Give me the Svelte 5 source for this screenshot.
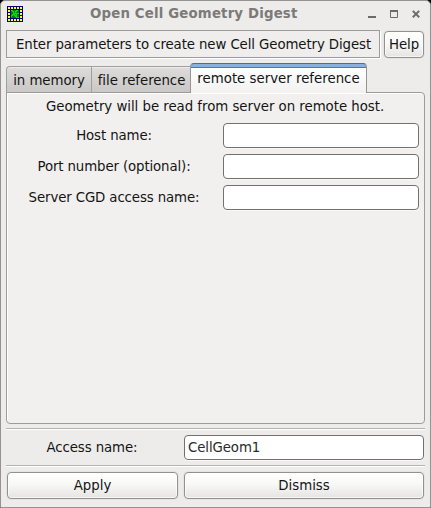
<script>
  const tabs = [
    { label: 'in memory', width: 85 },
    { label: 'file reference', width: 100 },
    { label: 'remote server reference', width: 177 }
  ];
  const fields = ['Host name:', 'Port number (optional):', 'Server CGD access name:'];
  const dots = [1, 4, 7, 10, 13];
  let active = $state(2);
  let values = $state(['', '', '']);
  let accessName = $state('CellGeom1');
</script>

<div class="screen">
  <div class="window">
    <header>
      <svg class="logo" width="16" height="16" viewBox="0 0 16 16" shape-rendering="crispEdges">
        <rect width="16" height="16" fill="#00007c" />
        {#each dots as d}
          <rect x={d} y="1" width="2" height="2" fill="#ffff20" />
          <rect x={d} y="13" width="2" height="2" fill="#ffff20" />
          <rect x="1" y={d} width="2" height="2" fill="#ffff20" />
          <rect x="13" y={d} width="2" height="2" fill="#ffff20" />
        {/each}
        <rect x="4" y="4" width="8" height="8" fill="#008000" />
        <path d="M4 4h2v1h1v2h1V5h1V4h2v1h-1v1H9v2H8v1h1v2H8v-1H7V9H6v1H5v1H4V9h1V8h1V6H5V5H4zM9 7h3v1h-2v3h2v1H9z" fill="#00e000" />
      </svg>
      <h1>Open Cell Geometry Digest</h1>
      <div class="controls">
        <svg width="52" height="9" viewBox="0 0 52 9" fill="none" stroke="#6c6b69">
          <path d="M0 7h8" stroke-width="2" />
          <path d="M22.5 1v6.5h7V1" />
          <path d="M22 1h8" stroke-width="2" />
          <path d="M44.8 .9l6.4 6.4M51.2 .9l-6.4 6.4" stroke-width="2" />
        </svg>
      </div>
    </header>

    <div class="intro">
      <div class="message"><span>Enter parameters to create new Cell Geometry Digest</span></div>
      <button class="help">Help</button>
    </div>

    <nav>
      {#each tabs as tab, i}
        <button class="tab" class:active={active === i} style:width="{tab.width}px" onclick={() => (active = i)}>{tab.label}</button>
      {/each}
    </nav>
    <section>
      <p>Geometry will be read from server on remote host.</p>
      {#each fields as field, i}
        <label><span>{field}</span><input type="text" bind:value={values[i]} /></label>
      {/each}
    </section>

    <hr />
    <label class="access"><span>Access name:</span><input type="text" bind:value={accessName} /></label>
    <hr />
    <footer>
      <button class="apply">Apply</button>
      <button class="dismiss">Dismiss</button>
    </footer>
  </div>
</div>

<style>
  :global(body) { overflow: hidden; }
  .screen { background: #000; width: 431px; height: 508px; }
  .window, .window * { box-sizing: border-box; }
  .window {
    display: flex; flex-direction: column;
    width: 431px; height: 508px; padding: 0 6px 0 5px;
    border: 1px solid #949391; border-radius: 5px 5px 0 0;
    background: #edeceb; color: #141414;
    font: 13.33px/16px "DejaVu Sans", sans-serif;
  }
  button, input { font: inherit; color: inherit; margin: 0; }
  header { display: flex; height: 29px; padding: 5px 0 0 1px; }
  .logo { flex: none; }
  h1 { margin: 0 0 0 67px; width: 208px; font-size: 13.33px; line-height: 16px; letter-spacing: .16px; color: #7b7a78; white-space: nowrap; }
  .controls { margin: 4px 0 0 70px; height: 9px; }
  .controls svg { display: block; }
  .intro { display: flex; gap: 4px; height: 28px; }
  .message {
    width: 374px; height: 28px; padding: 6px 0 0 9px; white-space: nowrap; letter-spacing: -.1px;
    border: 1px solid #9d9c9b; box-shadow: 1px 1px #fff; background: #efeeed;
  }
  .help, footer button {
    padding: 0; height: 27px; border: 1px solid #92918e; border-radius: 4px;
    background: linear-gradient(#fff 0%, #f8f8f7 45%, #e5e4e2 100%);
    box-shadow: 0 0 0 1px #e5e4e3, inset 0 0 0 1px #fffa;
    text-align: center;
  }
  .help { width: 40px; margin-top: 1px; white-space: nowrap; letter-spacing: -.1px; }
  nav { display: flex; align-items: flex-end; height: 35px; flex: none; }
  .tab {
    height: 27px; padding: 2px 0 0; border: 1px solid #a09f9d; border-right-width: 0;
    background: linear-gradient(#dddcdb, #c9c8c6); white-space: nowrap;
    box-shadow: inset 0 1px #edeceb; line-height: 16px; letter-spacing: -.04px;
  }
  .tab:first-child { border-radius: 4px 0 0; }
  .tab.active {
    height: 30px; border: 1px solid #969593; border-top: 1px solid #4b6d9c; border-bottom: 0;
    border-radius: 4px 4px 0 0; padding: 1px 0 0; margin-left: -1px; letter-spacing: 0;
    background: linear-gradient(#8cafdf 0 3px, #5477a7 3px 4px, #fff 4px, #f2f1f0 100%);
    box-shadow: none; position: relative; z-index: 1;
  }
  section {
    width: 419px; height: 332px; margin-top: -1px; flex: none; padding: 6px 5px 0 0;
    border: 1px solid #9d9c9b; border-radius: 0 4px 4px 4px;
    background: #f1f0ef; box-shadow: inset 1px 1px #fff;
  }
  p { margin: 0 0 8px 39px; height: 16px; white-space: nowrap; letter-spacing: -.035px; }
  section label { display: flex; justify-content: space-between; align-items: center; height: 25px; margin-bottom: 6px; }
  section label span { width: 214px; text-align: center; white-space: nowrap; letter-spacing: -.12px; }
  input {
    height: 25px; padding: 0 3px; background: #fff; outline: none;
    border: 1px solid #72716f; border-radius: 4px; box-shadow: 0 1px #f8f8f7;
  }
  section input { width: 196px; }
  hr { width: 419px; height: 2px; margin: 4px 0 5px; border: 0; border-top: 1px solid #b5b3b1; background: #fff; flex: none; }
  .access { display: flex; align-items: center; height: 25px; }
  .access span { width: 172px; text-align: center; margin-right: 6px; letter-spacing: -.1px; }
  .access input { width: 240px; color: #2a2a2a; letter-spacing: -.1px; }
  .access + hr { margin-top: 5px; }
  footer { display: flex; gap: 6px; padding-left: 1px; }
  .apply { width: 171px; }
  .dismiss { width: 240px; }
</style>
